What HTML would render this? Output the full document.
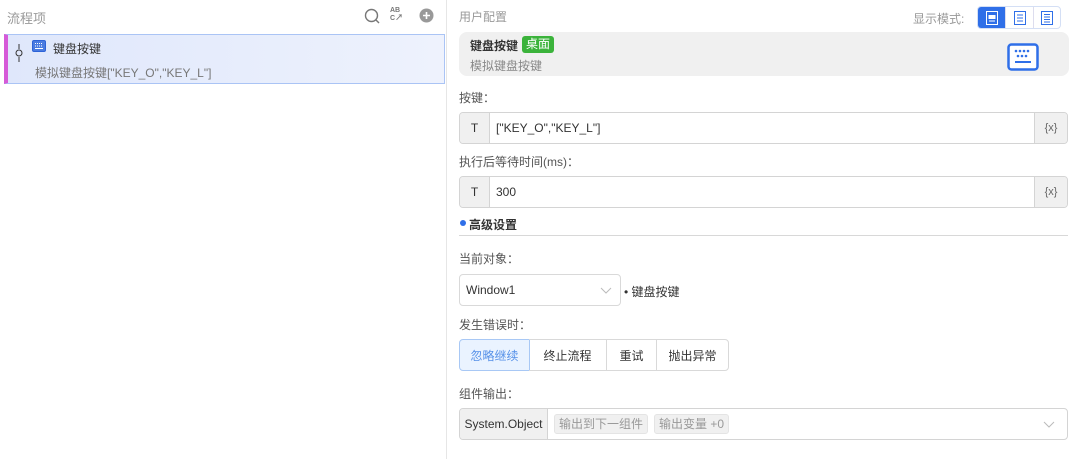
<!DOCTYPE html>
<html><head><meta charset="utf-8"><style>
*{box-sizing:border-box;margin:0;padding:0}
body{width:1079px;height:459px;background:#fff;font-family:"Liberation Sans","Noto Sans CJK SC",sans-serif;font-size:12px;color:#333;position:relative;overflow:hidden}
.a{position:absolute}
.lbl{color:#555;font-size:12px}
.inp{position:absolute;left:459px;width:609px;height:32px;border:1px solid #d4d4d4;border-radius:4px;display:flex;overflow:hidden}
.inp .t{width:30px;background:#f0f0f0;border-right:1px solid #d4d4d4;display:flex;align-items:center;justify-content:center;color:#333}
.inp .v{flex:1;display:flex;align-items:center;padding-left:6px;color:#333}
.inp .x{width:33px;background:#f0f0f0;border-left:1px solid #d4d4d4;display:flex;align-items:center;justify-content:center;color:#666;font-size:11px}
.btn{position:absolute;top:339px;height:32px;border:1px solid #d9d9d9;display:flex;align-items:center;justify-content:center;font-size:12px;color:#333}
.tag{background:#f0f0f0;border:1px solid #e4e4e4;border-radius:3px;color:#999;padding:0 4px;height:20px;line-height:18px;margin-left:6px;font-size:12px}
</style></head><body>
<div class="a" style="left:7px;top:8px;color:#999;font-size:13px">流程项</div>
<svg class="a" style="left:364px;top:8px" width="16" height="16"><circle cx="7.5" cy="7.5" r="6" fill="none" stroke="#777" stroke-width="1.4"/><path d="M12 12l3 3" stroke="#777" stroke-width="1.4"/></svg>
<div class="a" style="left:390px;top:7px;font-size:7px;color:#777;line-height:7px;font-weight:bold">AB<br>C<span style="font-size:8px">↗</span></div>
<svg class="a" style="left:419px;top:8px" width="15" height="15"><circle cx="7.5" cy="7.5" r="7" fill="#999"/><path d="M7.5 4v7M4 7.5h7" stroke="#fff" stroke-width="1.6"/></svg>
<div class="a" style="left:446px;top:0;width:1px;height:459px;background:#e6e6e6"></div>
<div class="a" style="left:4px;top:34px;width:441px;height:50px;border:1px solid #aac4f5;background:linear-gradient(90deg,#dfe7fb,#eef2fd);border-left:4px solid #d65ad8"></div>
<svg class="a" style="left:15px;top:44px" width="8" height="18"><path d="M4 0v5M4 13v5" stroke="#333"/><circle cx="4" cy="9" r="3" fill="none" stroke="#333"/></svg>
<svg class="a" style="left:32px;top:40px" width="14" height="12"><rect x=".5" y=".5" width="13" height="11" rx="1.5" fill="#4a7be0" stroke="#2d63d8"/><path d="M3 3.5h8M3 6h8" stroke="#fff" stroke-dasharray="1 1"/><path d="M3 8.5h8" stroke="#fff"/></svg>
<div class="a" style="left:53px;top:40px;font-size:12px;color:#333">键盘按键</div>
<div class="a" style="left:35px;top:64px;font-size:12px;color:#777">模拟键盘按键["KEY_O","KEY_L"]</div>

<div class="a" style="left:459px;top:8px;color:#999;font-size:12px">用户配置</div>
<div class="a" style="left:913px;top:10px;color:#999;font-size:12px">显示模式:</div>
<div class="a" style="left:977px;top:6px;width:84px;height:23px;border:1px solid #d4dff5;border-radius:4px;overflow:hidden;display:flex">
<div style="width:27px;background:#2f6fe8;display:flex;align-items:center;justify-content:center"><svg width="12" height="14"><rect x=".5" y=".5" width="11" height="13" fill="none" stroke="#fff"/><rect x="2.5" y="4" width="7" height="4" fill="#fff"/><path d="M3 10h6" stroke="#fff"/></svg></div>
<div style="width:28px;border-left:1px solid #dde;display:flex;align-items:center;justify-content:center"><svg width="12" height="14"><rect x=".5" y=".5" width="11" height="13" fill="none" stroke="#2f6fe8"/><path d="M3 4h6M3 7h6M3 10h6" stroke="#2f6fe8"/></svg></div>
<div style="flex:1;border-left:1px solid #dde;display:flex;align-items:center;justify-content:center"><svg width="12" height="14"><rect x=".5" y=".5" width="11" height="13" fill="none" stroke="#2f6fe8"/><path d="M3 3.5h6M3 6h6M3 8.5h6M3 11h6" stroke="#2f6fe8"/></svg></div>
</div>
<div class="a" style="left:459px;top:32px;width:610px;height:44px;background:#f0f0f0;border-radius:8px"></div>
<div class="a" style="left:470px;top:37px;font-weight:bold;font-size:12px;color:#333">键盘按键</div>
<div class="a" style="left:522px;top:36px;width:32px;height:17px;background:#3bb33b;border-radius:3px;color:#fff;font-size:12px;text-align:center;line-height:17px">桌面</div>
<div class="a" style="left:470px;top:57px;color:#888;font-size:12px">模拟键盘按键</div>
<svg class="a" style="left:1007px;top:43px" width="32" height="28"><rect x="1.5" y="1.5" width="29" height="25" rx="3" fill="#fff" stroke="#2f6fe8" stroke-width="2.5"/><g fill="#2f6fe8"><circle cx="9" cy="8" r="1.3"/><circle cx="13" cy="8" r="1.3"/><circle cx="17" cy="8" r="1.3"/><circle cx="21" cy="8" r="1.3"/><circle cx="11" cy="13" r="1.3"/><circle cx="15" cy="13" r="1.3"/><circle cx="19" cy="13" r="1.3"/></g><path d="M8 19h16" stroke="#2f6fe8" stroke-width="2"/></svg>

<div class="a lbl" style="left:459px;top:89px">按键：</div>
<div class="inp" style="top:112px"><div class="t">T</div><div class="v">["KEY_O","KEY_L"]</div><div class="x">{x}</div></div>
<div class="a lbl" style="left:459px;top:153px">执行后等待时间(ms)：</div>
<div class="inp" style="top:176px"><div class="t">T</div><div class="v">300</div><div class="x">{x}</div></div>
<div class="a" style="left:460px;top:220px;width:6px;height:6px;border-radius:50%;background:#2f6fe8"></div>
<div class="a" style="left:469px;top:216px;font-weight:bold;font-size:12px;color:#333">高级设置</div>
<div class="a" style="left:459px;top:235px;width:609px;height:1px;background:#d8d8d8"></div>
<div class="a lbl" style="left:459px;top:250px">当前对象：</div>
<div class="a" style="left:459px;top:274px;width:162px;height:32px;border:1px solid #d9d9d9;border-radius:4px;padding-left:6px;line-height:30px;color:#333">Window1<svg style="position:absolute;right:8px;top:12px" width="12" height="7"><path d="M1 1l5 5 5-5" fill="none" stroke="#bbb"/></svg></div>
<div class="a" style="left:624px;top:283px;color:#333">• 键盘按键</div>
<div class="a lbl" style="left:459px;top:316px">发生错误时：</div>
<div class="btn" style="left:459px;width:71px;background:#eaf3ff;border-color:#a8c8f5;color:#5590e8;border-radius:4px 0 0 4px">忽略继续</div>
<div class="btn" style="left:529px;width:78px;border-left:none">终止流程</div>
<div class="btn" style="left:606px;width:51px">重试</div>
<div class="btn" style="left:656px;width:73px;border-radius:0 4px 4px 0">抛出异常</div>
<div class="a lbl" style="left:459px;top:385px">组件输出：</div>
<div class="a" style="left:459px;top:408px;width:609px;height:32px;border:1px solid #d4d4d4;border-radius:4px;display:flex;align-items:center;overflow:hidden">
<div style="width:88px;height:100%;background:#f0f0f0;border-right:1px solid #d4d4d4;line-height:30px;text-align:center;color:#333">System.Object</div>
<span class="tag" style="margin-left:6px">输出到下一组件</span><span class="tag">输出变量 +0</span>
<svg style="position:absolute;right:12px;top:12px" width="12" height="7"><path d="M1 1l5 5 5-5" fill="none" stroke="#bbb"/></svg>
</div>
</body></html>
